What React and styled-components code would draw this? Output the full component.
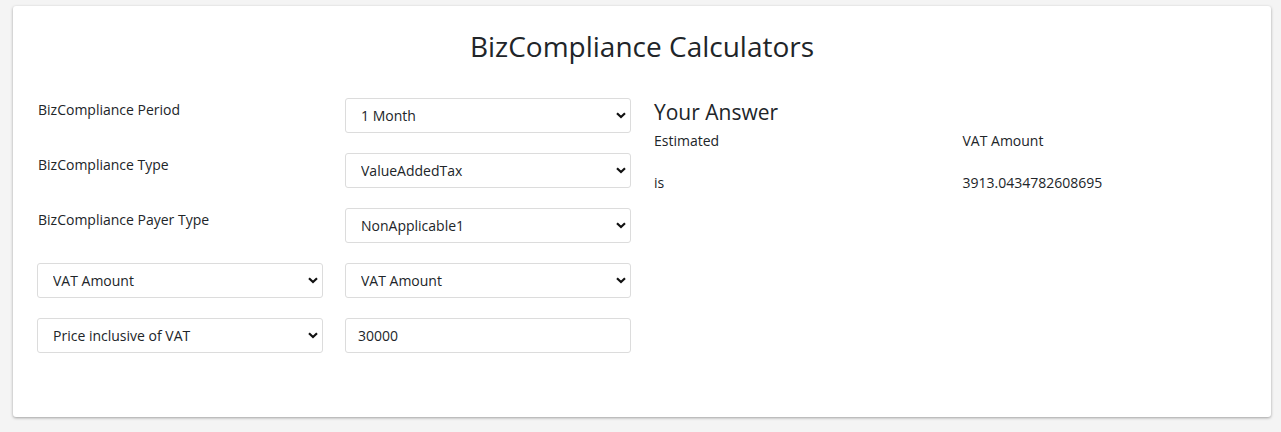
import React from "react";
import styled, { createGlobalStyle } from "styled-components";

const Global = createGlobalStyle`
  html, body { margin: 0; padding: 0; background: #f4f4f4; }
  body { font-family: "Open Sans", "Noto Sans", sans-serif; color: #212529; }
  * { box-sizing: border-box; }
`;

const Page = styled.div`
  padding: 6px 10px 15px 13px;
`;

const Card = styled.div`
  background: #fff;
  border-radius: 3px;
  box-shadow: 0 1px 3px rgba(0, 0, 0, 0.35);
  height: 411px;
  padding: 22px 12px 0;
`;

const Title = styled.h1`
  margin: 0 0 34px;
  text-align: center;
  font-weight: 400;
  font-size: 28px;
  line-height: 36px;
  color: #212529;
`;

const Columns = styled.div`
  display: grid;
  grid-template-columns: 1fr 1fr;
`;

const FormCol = styled.div`
  display: grid;
  grid-template-columns: 1fr 1fr;
  column-gap: 22px;
  row-gap: 20px;
  padding: 0 11px 0 12px;
`;

const Label = styled.div`
  font-size: 14px;
  line-height: 20px;
  padding: 2px 0 0 1px;
  color: #212529;
`;

const SelectWrap = styled.div`
  position: relative;
  height: 35px;
`;

const Select = styled.select`
  appearance: none;
  width: 100%;
  height: 35px;
  border: 1px solid #dcdcdc;
  border-radius: 3px;
  background: #fff;
  padding: 0 30px 0 15px;
  font-family: inherit;
  font-size: 14px;
  color: #212529;
  outline: none;
`;

const Chevron = styled.svg`
  position: absolute;
  right: 5px;
  top: 14px;
  width: 10px;
  height: 7px;
  pointer-events: none;
`;

const Input = styled.input`
  width: 100%;
  height: 35px;
  border: 1px solid #dcdcdc;
  border-radius: 3px;
  padding: 0 12px;
  font-family: inherit;
  font-size: 14px;
  color: #212529;
  outline: none;
`;

const AnswerCol = styled.div`
  padding: 0 12px;
`;

const AnswerTitle = styled.h2`
  margin: 0;
  font-weight: 400;
  font-size: 21px;
  line-height: 28px;
  color: #212529;
`;

const AnswerGrid = styled.div`
  display: grid;
  grid-template-columns: 1fr 1fr;
  row-gap: 21px;
  margin: 4px -12px 0;
`;

const AnswerCell = styled.div`
  font-size: 14px;
  line-height: 21px;
  padding: 0 12px;
`;

function Dropdown({ value }) {
  return (
    <SelectWrap>
      <Select defaultValue={value}>
        <option>{value}</option>
      </Select>
      <Chevron viewBox="0 0 10 7">
        <path d="M1 1.2 L5 5 L9 1.2" fill="none" stroke="#111" strokeWidth="2.2" />
      </Chevron>
    </SelectWrap>
  );
}

export default function App() {
  return (
    <>
      <Global />
      <Page>
        <Card>
          <Title>BizCompliance Calculators</Title>
          <Columns>
            <FormCol>
              <Label>BizCompliance Period</Label>
              <Dropdown value="1 Month" />
              <Label>BizCompliance Type</Label>
              <Dropdown value="ValueAddedTax" />
              <Label>BizCompliance Payer Type</Label>
              <Dropdown value="NonApplicable1" />
              <Dropdown value="VAT Amount" />
              <Dropdown value="VAT Amount" />
              <Dropdown value="Price inclusive of VAT" />
              <Input defaultValue="30000" />
            </FormCol>
            <AnswerCol>
              <AnswerTitle>Your Answer</AnswerTitle>
              <AnswerGrid>
                <AnswerCell>Estimated</AnswerCell>
                <AnswerCell>VAT Amount</AnswerCell>
                <AnswerCell>is</AnswerCell>
                <AnswerCell>3913.0434782608695</AnswerCell>
              </AnswerGrid>
            </AnswerCol>
          </Columns>
        </Card>
      </Page>
    </>
  );
}
